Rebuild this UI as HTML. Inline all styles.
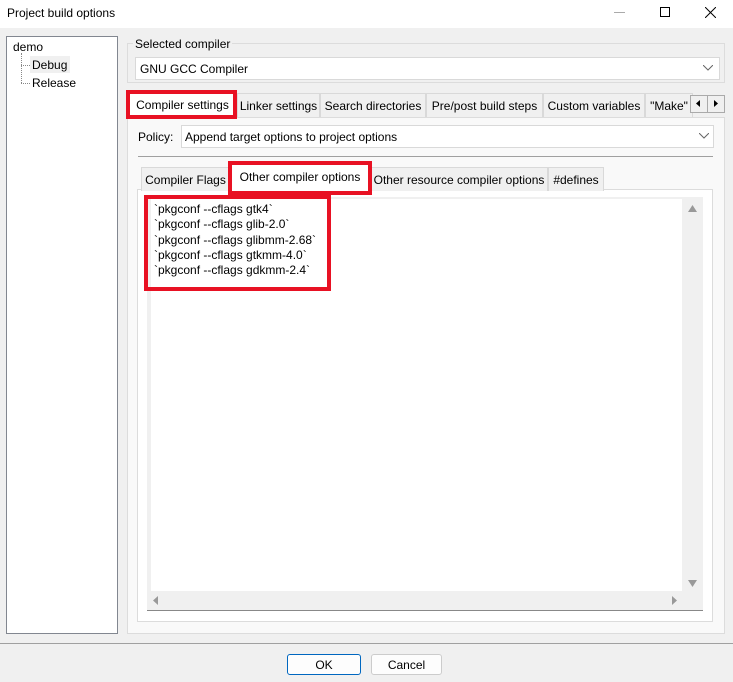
<!DOCTYPE html>
<html><head><style>
*{box-sizing:border-box;margin:0;padding:0}
body{width:733px;height:682px;background:#f0f0f0;font-family:"Liberation Sans",sans-serif;font-size:12px;color:#000;position:relative;overflow:hidden}
.a{position:absolute}
.tab{position:absolute;height:24px;border:1px solid #d9d9d9;border-bottom:none;background:#f0f0f0;padding:5px 0 0 0;text-align:center;white-space:nowrap}
.red{position:absolute;border:4px solid #e81123}
</style></head><body>
<div class="a" style="left:0;top:0;width:733px;height:28px;background:#fff"></div>
<div class="a" style="left:7px;top:6px;font-size:12px">Project build options</div>
<div class="a" style="left:614px;top:12px;width:11px;height:1px;background:#aaa"></div>
<div class="a" style="left:660px;top:7px;width:10px;height:10px;border:1px solid #000"></div>
<svg class="a" style="left:705px;top:7px" width="11" height="11"><path d="M0 0L11 11M11 0L0 11" stroke="#000" stroke-width="1"/></svg>

<div class="a" style="left:6px;top:36px;width:112px;height:598px;background:#fff;border:1px solid #828790"></div>
<div class="a" style="left:13px;top:40px">demo</div>
<div class="a" style="left:30px;top:56px;width:40px;height:17px;background:#f0f0f0"></div>
<div class="a" style="left:32px;top:58px">Debug</div>
<div class="a" style="left:32px;top:76px">Release</div>
<div class="a" style="left:21px;top:53px;height:30px;border-left:1px dotted #888"></div>
<div class="a" style="left:21px;top:65px;width:9px;border-top:1px dotted #888"></div>
<div class="a" style="left:21px;top:83px;width:9px;border-top:1px dotted #888"></div>

<div class="a" style="left:127px;top:43px;width:598px;height:40px;border:1px solid #dcdcdc"></div>
<div class="a" style="left:133px;top:37px;background:#f0f0f0;padding:0 2px">Selected compiler</div>
<div class="a" style="left:135px;top:57px;width:585px;height:23px;background:#fff;border:1px solid #d9d9d9"></div>
<div class="a" style="left:140px;top:62px">GNU GCC Compiler</div>
<svg class="a" style="left:703px;top:65px" width="10" height="6"><path d="M0 0L5 5L10 0" stroke="#666" fill="none"/></svg>

<div class="a" style="left:127px;top:117px;width:598px;height:517px;background:#f9f9f9;border:1px solid #dcdcdc"></div>
<div class="tab" style="left:129px;top:92px;width:107px;background:#fff;height:26px">Compiler settings</div>
<div class="tab" style="left:237px;top:93px;width:83px">Linker settings</div>
<div class="tab" style="left:320px;top:93px;width:106px">Search directories</div>
<div class="tab" style="left:426px;top:93px;width:117px">Pre/post build steps</div>
<div class="tab" style="left:543px;top:93px;width:102px">Custom variables</div>
<div class="tab" style="left:645px;top:93px;width:48px">"Make"</div>
<div class="a" style="left:690px;top:95px;width:35px;height:18px;background:#f0f0f0;border:1px solid #aaa"></div>
<div class="a" style="left:707px;top:95px;width:1px;height:18px;background:#aaa"></div>
<svg class="a" style="left:696px;top:100px" width="4" height="7"><path d="M4 0L0 3.5L4 7Z" fill="#000"/></svg>
<svg class="a" style="left:714px;top:100px" width="4" height="7"><path d="M0 0L4 3.5L0 7Z" fill="#000"/></svg>
<div class="red" style="left:126px;top:90px;width:111px;height:29px"></div>

<div class="a" style="left:138px;top:130px">Policy:</div>
<div class="a" style="left:181px;top:125px;width:533px;height:23px;background:#fff;border:1px solid #d9d9d9"></div>
<div class="a" style="left:185px;top:130px">Append target options to project options</div>
<svg class="a" style="left:699px;top:133px" width="10" height="6"><path d="M0 0L5 5L10 0" stroke="#666" fill="none"/></svg>
<div class="a" style="left:138px;top:156px;width:575px;height:1px;background:#a0a0a0"></div>

<div class="a" style="left:137px;top:189px;width:576px;height:433px;background:#fff;border:1px solid #dcdcdc"></div>
<div class="tab" style="left:141px;top:167px;width:89px">Compiler Flags</div>
<div class="tab" style="left:230px;top:164px;width:140px;background:#fff;height:26px">Other compiler options</div>
<div class="tab" style="left:370px;top:167px;width:178px">Other resource compiler options</div>
<div class="tab" style="left:548px;top:167px;width:56px">#defines</div>

<div class="a" style="left:147px;top:197px;width:556px;height:414px;background:#f0f0f0;border-bottom:1px solid #888"></div>
<div class="a" style="left:151px;top:199px;width:531px;height:392px;background:#fff"></div>
<svg class="a" style="left:688px;top:205px" width="9" height="7"><path d="M0 7L4.5 0L9 7Z" fill="#999"/></svg>
<svg class="a" style="left:688px;top:580px" width="9" height="7"><path d="M0 0L4.5 7L9 0Z" fill="#999"/></svg>
<svg class="a" style="left:153px;top:596px" width="5" height="9"><path d="M5 0L0 4.5L5 9Z" fill="#999"/></svg>
<svg class="a" style="left:672px;top:596px" width="5" height="9"><path d="M0 0L5 4.5L0 9Z" fill="#999"/></svg>
<div class="a" style="left:154px;top:202px;line-height:15.3px;font-size:12px">`pkgconf --cflags gtk4`<br>`pkgconf --cflags glib-2.0`<br>`pkgconf --cflags glibmm-2.68`<br>`pkgconf --cflags gtkmm-4.0`<br>`pkgconf --cflags gdkmm-2.4`</div>
<div class="red" style="left:144px;top:195px;width:187px;height:96px"></div>
<div class="red" style="left:228px;top:161px;width:144px;height:34px"></div>

<div class="a" style="left:0;top:643px;width:733px;height:1px;background:#a0a0a0"></div>
<div class="a" style="left:287px;top:654px;width:74px;height:21px;background:#fdfdfd;border:1px solid #0067c0;border-radius:3px;text-align:center;padding-top:3px">OK</div>
<div class="a" style="left:371px;top:654px;width:71px;height:21px;background:#fdfdfd;border:1px solid #ccc;border-radius:3px;text-align:center;padding-top:3px">Cancel</div>
</body></html>
